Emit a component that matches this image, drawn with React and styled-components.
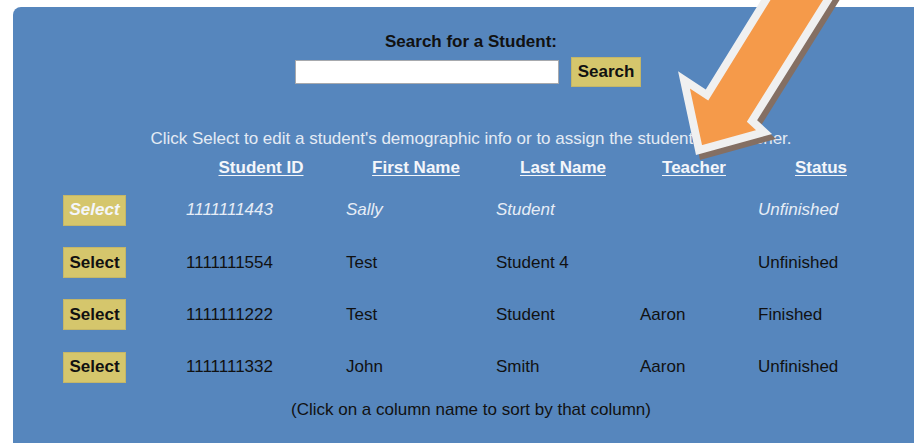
import React from "react";
import styled, { createGlobalStyle } from "styled-components";

const GlobalStyle = createGlobalStyle`
    html, body {
        margin: 0;
        padding: 0;
        background: #ffffff;
        overflow: hidden;
    }
    body {
        font-family: "Liberation Sans", Arial, sans-serif;
        font-size: 17px;
    }
`;

const Page = styled.div`
    position: relative;
    width: 914px;
    height: 443px;
    padding: 7px 0 0 13px;
    box-sizing: border-box;
    overflow: hidden;
`;

const Panel = styled.div`
    width: 916px;
    height: 436px;
    background: #5686bd;
    border-top-left-radius: 8px;
    padding-top: 25px;
    box-sizing: border-box;
    display: flex;
    flex-direction: column;
    align-items: center;
`;

const SearchLabel = styled.div`
    font-weight: bold;
    line-height: 20px;
    color: #111;
`;

const SearchRow = styled.div`
    display: flex;
    align-items: center;
    gap: 12px;
    margin-top: 5px;
    padding-right: 6px;
`;

const SearchInput = styled.input`
    width: 264px;
    height: 24px;
    box-sizing: border-box;
    border: 1px solid #a7a9ad;
    background: #fff;
    padding: 0 4px;
    font: inherit;
`;

const KhakiButton = styled.button`
    width: ${({ $w }) => $w}px;
    height: ${({ $h }) => $h}px;
    padding: 0;
    background: #d5c66c;
    border: 1px solid #c4b668;
    font-family: inherit;
    font-size: 17px;
    font-weight: bold;
    color: ${({ $active }) => ($active ? "#f4f6fa" : "#111")};
    font-style: ${({ $active }) => ($active ? "italic" : "normal")};
    cursor: pointer;
`;

const Hint = styled.div`
    margin-top: 42px;
    line-height: 20px;
    color: #e4ebf4;
`;

const Table = styled.div`
    align-self: flex-start;
    margin-left: 45px;
    margin-top: 9px;
    display: grid;
    grid-template-columns: 123px 160px 150px 144px 118px 136px;
`;

const HeadCell = styled.a`
    text-align: center;
    line-height: 20px;
    font-weight: bold;
    color: #f4f6fa;
    text-decoration: underline;
    text-underline-offset: 2px;
    cursor: pointer;
    margin-bottom: 6px;
`;

const Cell = styled.div`
    height: 52.4px;
    display: flex;
    align-items: center;
    padding-left: 5px;
    color: ${({ $active }) => ($active ? "#e6edf6" : "#111")};
    font-style: ${({ $active }) => ($active ? "italic" : "normal")};
`;

const Footer = styled.div`
    margin-top: 6px;
    line-height: 20px;
    color: #111;
`;

const Overlay = styled.svg`
    position: absolute;
    left: 0;
    top: 0;
    pointer-events: none;
`;

const columns = ["Student ID", "First Name", "Last Name", "Teacher", "Status"];

const students = [
    { id: "1111111443", first: "Sally", last: "Student", teacher: "", status: "Unfinished", active: true },
    { id: "1111111554", first: "Test", last: "Student 4", teacher: "", status: "Unfinished" },
    { id: "1111111222", first: "Test", last: "Student", teacher: "Aaron", status: "Finished" },
    { id: "1111111332", first: "John", last: "Smith", teacher: "Aaron", status: "Unfinished" },
];

// big callout arrow pointing at the Teacher column
const arrowPoints = "699,150 684,80 707,95 772,-10 834,-10 752,121 764,132";

const App = () => {
    return (
        <Page>
            <GlobalStyle />
            <Panel>
                <SearchLabel>Search for a Student:</SearchLabel>
                <SearchRow>
                    <SearchInput type="text" />
                    <KhakiButton $w={70} $h={30}>
                        Search
                    </KhakiButton>
                </SearchRow>
                <Hint>Click Select to edit a student's demographic info or to assign the student to a teacher.</Hint>
                <Table>
                    <span />
                    {columns.map((c) => (
                        <HeadCell key={c}>{c}</HeadCell>
                    ))}
                    {students.map((s) => (
                        <React.Fragment key={s.id}>
                            <Cell>
                                <KhakiButton $w={63} $h={31} $active={s.active}>
                                    Select
                                </KhakiButton>
                            </Cell>
                            <Cell $active={s.active}>{s.id}</Cell>
                            <Cell $active={s.active}>{s.first}</Cell>
                            <Cell $active={s.active}>{s.last}</Cell>
                            <Cell $active={s.active}>{s.teacher}</Cell>
                            <Cell $active={s.active}>{s.status}</Cell>
                        </React.Fragment>
                    ))}
                </Table>
                <Footer>(Click on a column name to sort by that column)</Footer>
            </Panel>
            <Overlay width="914" height="443" viewBox="0 0 914 443">
                <g transform="translate(4 5)">
                    <polygon points={arrowPoints} fill="#846f63" stroke="#846f63" strokeWidth="8" strokeLinejoin="miter" />
                </g>
                <polygon points={arrowPoints} fill="#f59a4a" stroke="#f0f0f0" strokeWidth="8" strokeLinejoin="miter" />
            </Overlay>
        </Page>
    );
};

export default App;
